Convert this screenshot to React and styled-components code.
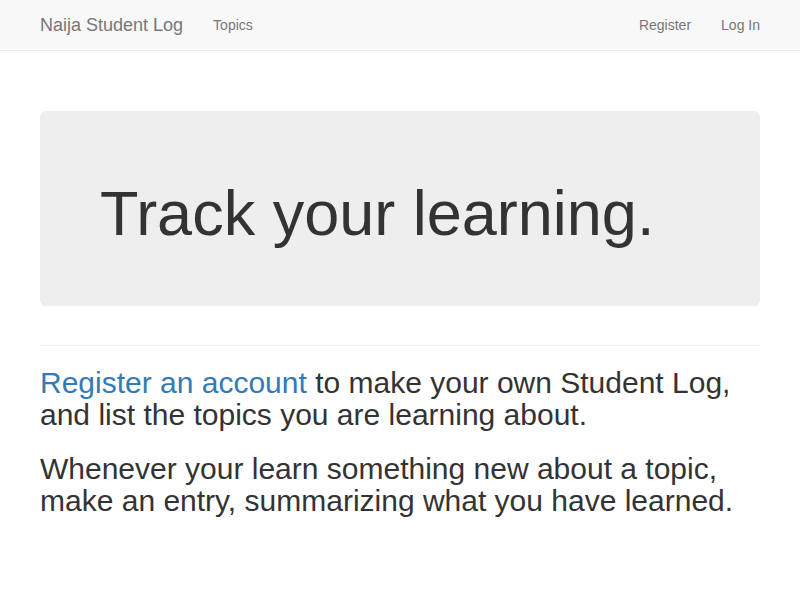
import React from "react";
import styled, { createGlobalStyle } from "styled-components";

const GlobalStyle = createGlobalStyle`
  body {
    margin: 0;
    font-family: "Liberation Sans", Arial, sans-serif;
    font-size: 14px;
    line-height: 1.428571;
    color: #333;
    background: #fff;
  }
`;

const Navbar = styled.nav`
  height: 50px;
  background: #f8f8f8;
  border-bottom: 1px solid #e7e7e7;
`;

const NavInner = styled.div`
  width: 720px;
  margin: 0 auto;
  display: flex;
  align-items: center;
  height: 50px;
`;

const Brand = styled.a`
  font-size: 18px;
  line-height: 20px;
  color: #777;
  text-decoration: none;
  margin-right: 15px;
`;

const NavList = styled.div`
  display: flex;
  margin-left: ${(p) => (p.right ? "auto" : "0")};
`;

const NavLink = styled.a`
  padding: 15px;
  line-height: 20px;
  color: #777;
  text-decoration: none;
  &:last-child {
    padding-right: ${(p) => (p.edge ? "0" : "15px")};
  }
`;

const Container = styled.main`
  width: 720px;
  margin: 0 auto;
  padding-top: 60px;
`;

const Jumbotron = styled.div`
  background: #eee;
  border-radius: 6px;
  padding: 48px 60px;
`;

const Title = styled.h1`
  margin: 20px 0 10px;
  font-size: 63px;
  font-weight: 500;
  line-height: 1.1;
  color: #333;
`;

const Rule = styled.hr`
  margin: 39px 0 21px;
  border: 0;
  border-top: 1px solid #eee;
`;

const Lead = styled.p`
  margin: 0 0 22px;
  font-size: 30px;
  line-height: 32px;
  color: #333;
`;

const Link = styled.a`
  color: #337ab7;
  text-decoration: none;
`;

export default function App() {
  return (
    <>
      <GlobalStyle />
      <Navbar>
        <NavInner>
          <Brand href="#">Naija Student Log</Brand>
          <NavList>
            <NavLink href="#">Topics</NavLink>
          </NavList>
          <NavList right>
            <NavLink href="#">Register</NavLink>
            <NavLink href="#" edge>
              Log In
            </NavLink>
          </NavList>
        </NavInner>
      </Navbar>
      <Container>
        <Jumbotron>
          <Title>Track your learning.</Title>
        </Jumbotron>
        <Rule />
        <Lead>
          <Link href="#">Register an account</Link> to make your own Student
          Log, and list the topics you are learning about.
        </Lead>
        <Lead>
          Whenever your learn something new about a topic, make an entry,
          summarizing what you have learned.
        </Lead>
      </Container>
    </>
  );
}
